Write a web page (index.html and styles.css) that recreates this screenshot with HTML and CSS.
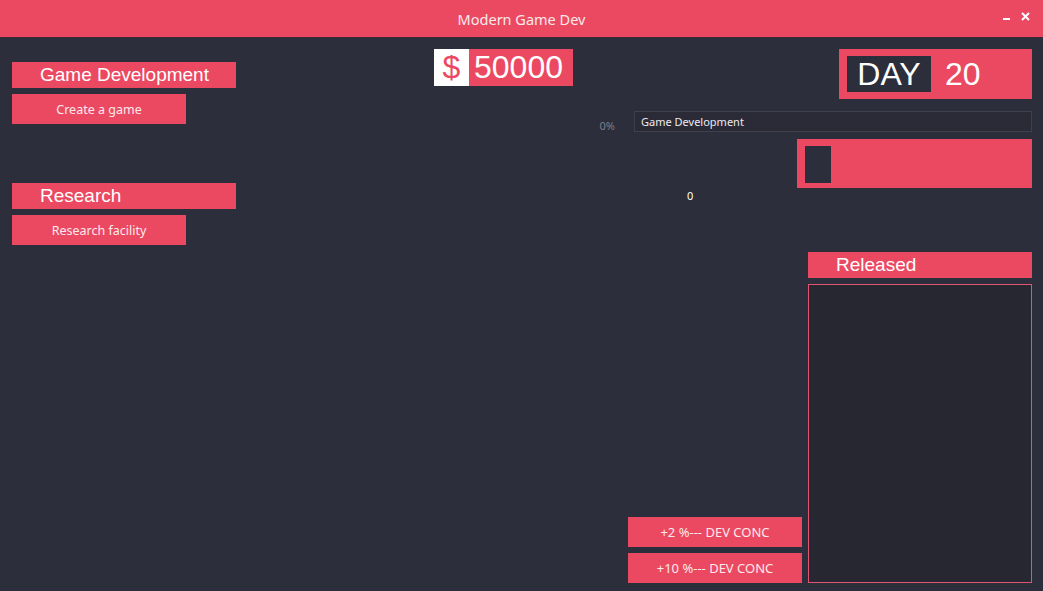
FILE: index.html
```html
<!DOCTYPE html>
<html lang="en">
<head>
    <meta charset="UTF-8">
    <meta name="viewport" content="width=device-width, initial-scale=1.0">
    <title>Modern Game Dev</title>
    <link rel="stylesheet" href="styles.css">
</head>
<body>
    <div class="titlebar">
        <span class="title">Modern Game Dev</span>
        <div class="controls">
            <svg class="ctl" width="9" height="9" viewBox="0 0 9 9"><rect x="1" y="6" width="7" height="2" fill="#fff"/></svg>
            <svg class="ctl" width="9" height="9" viewBox="0 0 9 9"><path d="M1 1 L8 8 M8 1 L1 8" stroke="#fff" stroke-width="2"/></svg>
        </div>
    </div>

    <div class="main">
        <div class="side">
            <div class="section">
                <div class="heading">Game Development</div>
                <button class="btn">Create a game</button>
            </div>
            <div class="section">
                <div class="heading">Research</div>
                <button class="btn">Research facility</button>
            </div>
        </div>

        <div class="center">
            <div class="top">
                <div class="money">
                    <span class="sign">$</span>
                    <span class="amount" id="money">50000</span>
                </div>
                <div class="day">
                    <span class="day-label">DAY</span>
                    <span class="day-num" id="day">20</span>
                </div>
            </div>

            <div class="progress-row">
                <span class="percent">0%</span>
                <div class="progress">Game Development</div>
            </div>

            <div class="dev-box">
                <div class="dev-fill"></div>
            </div>

            <div class="counter">0</div>

            <div class="bottom">
                <div class="boosts">
                    <button class="btn wide">+2 %--- DEV CONC</button>
                    <button class="btn wide">+10 %--- DEV CONC</button>
                </div>
                <div class="released">
                    <div class="heading">Released</div>
                    <div class="list"></div>
                </div>
            </div>
        </div>
    </div>
</body>
</html>
```

FILE: styles.css
```css
* {
    box-sizing: border-box;
}
html, body {
    height: 100%;
}
body {
    margin: 0;
    background-color: #2d2e3b;
    color: white;
    font-family: "Noto Sans", sans-serif;
    display: flex;
    flex-direction: column;
    overflow: hidden;
}
.titlebar {
    height: 38px;
    background-color: #eb4962;
    border-bottom: 1px solid #3b2937;
    display: flex;
    align-items: center;
    justify-content: center;
    position: relative;
}
.title {
    font-size: 14.5px;
    color: #fbe9ec;
}
.controls {
    position: absolute;
    right: 13px;
    top: 12px;
    display: flex;
    gap: 10px;
}
.main {
    flex: 1;
    display: flex;
    padding: 0 11px 8px 12px;
}
.side {
    width: 224px;
    padding-top: 24px;
    display: flex;
    flex-direction: column;
    gap: 59px;
}
.section {
    display: flex;
    flex-direction: column;
    gap: 6px;
}
.heading {
    background-color: #eb4962;
    height: 26px;
    line-height: 26px;
    padding-left: 28px;
    font-family: "Liberation Sans", Arial, sans-serif;
    font-size: 19px;
}
.btn {
    width: 174px;
    height: 30px;
    border: none;
    background-color: #eb4962;
    color: #fbe9ec;
    font-family: "Noto Sans", sans-serif;
    font-size: 12.5px;
    padding: 0;
    cursor: pointer;
}
.center {
    flex: 1;
    display: flex;
    flex-direction: column;
}
.top {
    display: flex;
    align-items: flex-start;
    margin-top: 11px;
    padding-left: 198px;
}
.money {
    display: flex;
    height: 37px;
    font-family: "Liberation Sans", Arial, sans-serif;
    font-size: 32px;
    line-height: 37px;
}
.sign {
    width: 35px;
    background-color: white;
    color: #eb4962;
    text-align: center;
}
.amount {
    width: 104px;
    background-color: #eb4962;
    padding-left: 5px;
}
.day {
    margin-left: auto;
    width: 193px;
    height: 50px;
    background-color: #eb4962;
    padding: 7px 8px;
    display: flex;
    align-items: center;
    font-family: "Liberation Sans", Arial, sans-serif;
    font-size: 32px;
}
.day-label {
    width: 84px;
    height: 36px;
    line-height: 36px;
    background-color: #2d2e3b;
    text-align: center;
}
.day-num {
    margin-left: 14px;
}
.progress-row {
    display: flex;
    align-items: flex-start;
    justify-content: flex-end;
    margin-top: 12px;
    height: 21px;
}
.percent {
    color: #7d7e88;
    font-size: 11px;
    line-height: 14px;
    margin-right: 19px;
    padding-top: 8px;
}
.progress {
    width: 398px;
    height: 21px;
    border: 1px solid #3f404c;
    background-color: #2a2b37;
    font-size: 11px;
    line-height: 19px;
    padding-left: 6px;
    color: #eceaf0;
}
.dev-box {
    align-self: flex-end;
    width: 235px;
    height: 49px;
    margin-top: 7px;
    background-color: #eb4962;
    padding: 7px 8px;
}
.dev-fill {
    width: 26px;
    height: 37px;
    background-color: #2d2e3b;
}
.counter {
    font-size: 11px;
    line-height: 14px;
    margin-top: 1px;
    padding-left: 451px;
}
.bottom {
    flex: 1;
    display: flex;
    justify-content: flex-end;
    gap: 6px;
    margin-top: 49px;
}
.boosts {
    align-self: flex-end;
    display: flex;
    flex-direction: column;
    gap: 6px;
}
.btn.wide {
    width: 174px;
    font-size: 13px;
}
.released {
    width: 224px;
    display: flex;
    flex-direction: column;
    gap: 6px;
}
.list {
    flex: 1;
    background-color: #262731;
    border: 1px solid #e25570;
}
```
